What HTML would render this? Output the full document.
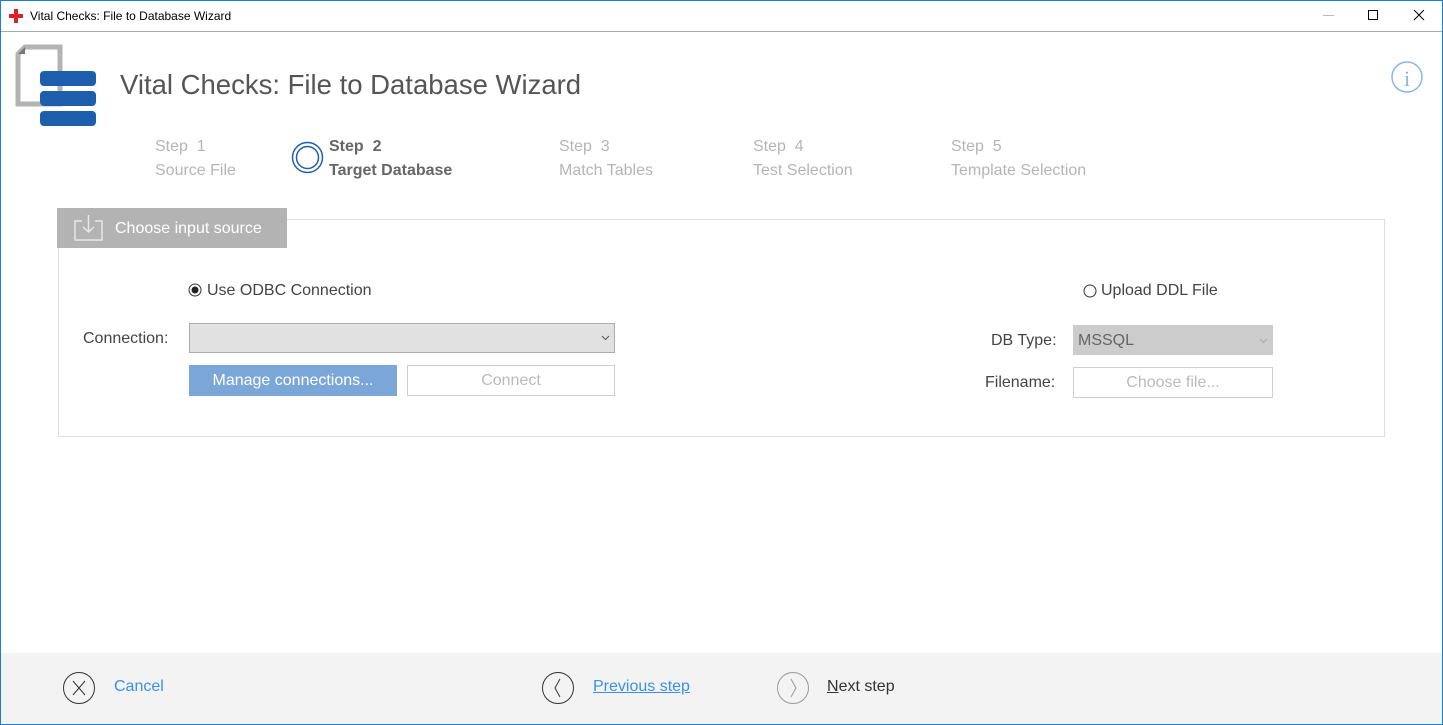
<!DOCTYPE html>
<html><head><meta charset="utf-8"><style>
*{margin:0;padding:0;box-sizing:border-box}
body{width:1443px;height:725px;position:relative;overflow:hidden;background:#fff;font-family:"Liberation Sans",sans-serif;color:#444}
.a{position:absolute;white-space:nowrap}
.frame{position:absolute;left:0;top:0;width:1443px;height:725px;border:1px solid #1a7fd4;pointer-events:none}
.step{color:#b5b5b5;font-size:16px;line-height:24px}
.btn{position:absolute;font-size:15px;text-align:center}
</style></head><body>
<div class="a" style="left:8px;top:8px;width:16px;height:16px">
<div class="a" style="left:6px;top:1px;width:4px;height:14px;background:#d9232b"></div>
<div class="a" style="left:1px;top:6px;width:14px;height:4px;background:#d9232b"></div></div>
<div class="a" style="left:30px;top:9px;font-size:12px;color:#000">Vital Checks: File to Database Wizard</div>
<div class="a" style="left:1323px;top:15px;width:11px;height:1px;background:#bbb"></div>
<div class="a" style="left:1368px;top:10px;width:10px;height:10px;border:1px solid #000"></div>
<svg class="a" style="left:1413px;top:9px" width="12" height="12"><path d="M1 1L11 11M11 1L1 11" stroke="#000" stroke-width="1"/></svg>
<div class="a" style="left:1px;top:31px;width:1441px;height:1px;background:#aaa"></div>
<svg class="a" style="left:15px;top:44px" width="85" height="85">
<path d="M10 3H45V60H3V10Z" fill="none" stroke="#b3b3b3" stroke-width="5"/>
<path d="M3 10L10 3V10Z" fill="#777"/>
<rect x="25" y="27" width="56" height="15" rx="4" fill="#1e5fad"/>
<rect x="25" y="47" width="56" height="15" rx="4" fill="#1e5fad"/>
<rect x="25" y="67" width="56" height="15" rx="4" fill="#1e5fad"/>
</svg>
<div class="a" style="left:120px;top:69px;font-size:27.5px;color:#555">Vital Checks: File to Database Wizard</div>
<svg class="a" style="left:1390px;top:60px" width="34" height="34"><circle cx="17" cy="17" r="15" fill="none" stroke="#8ab6e6" stroke-width="1.5"/><text x="17" y="26" font-family="Liberation Serif" font-size="22" fill="#8ab6e6" text-anchor="middle">i</text></svg>
<div class="a step" style="left:155px;top:135px">Step&nbsp; 1<br>Source File</div>
<svg class="a" style="left:291px;top:141px" width="33" height="33"><circle cx="16.5" cy="16.5" r="15" fill="none" stroke="#1e5fad" stroke-width="1.5"/><circle cx="16.5" cy="16.5" r="11" fill="none" stroke="#1e5fad" stroke-width="1.5"/></svg>
<div class="a step" style="left:329px;top:135px;color:#666;font-weight:bold">Step&nbsp; 2<br>Target Database</div>
<div class="a step" style="left:559px;top:135px">Step&nbsp; 3<br>Match Tables</div>
<div class="a step" style="left:753px;top:135px">Step&nbsp; 4<br>Test Selection</div>
<div class="a step" style="left:951px;top:135px">Step&nbsp; 5<br>Template Selection</div>
<div class="a" style="left:58px;top:219px;width:1327px;height:218px;border:1px solid #ddd"></div>
<div class="a" style="left:57px;top:208px;width:230px;height:40px;background:#b3b3b3"></div>
<svg class="a" style="left:72px;top:213px" width="34" height="30"><path d="M10 8H3V27H30V8H23" fill="none" stroke="#e8e8e8" stroke-width="1.5"/><path d="M16.5 2V19M11 14L16.5 19L22 14" fill="none" stroke="#e8e8e8" stroke-width="1.5"/></svg>
<div class="a" style="left:115px;top:220px;font-size:16px;color:#fff">Choose input source</div>
<svg class="a" style="left:188px;top:283px" width="14" height="14"><circle cx="7" cy="7" r="6" fill="none" stroke="#333"/><circle cx="7" cy="7" r="3.5" fill="#222"/></svg>
<div class="a" style="left:207px;top:282px;font-size:16px;color:#444">Use ODBC Connection</div>
<div class="a" style="left:83px;top:330px;font-size:16px;color:#444">Connection:</div>
<div class="a" style="left:189px;top:323px;width:426px;height:30px;background:#e1e1e1;border:1px solid #adadad"></div>
<svg class="a" style="left:601px;top:335px" width="9" height="6"><path d="M1 1L4.5 4.5L8 1" fill="none" stroke="#555"/></svg>
<div class="btn" style="left:189px;top:365px;width:208px;height:31px;background:#7ba7d8;color:#fff;line-height:31px;font-size:16px">Manage connections...</div>
<div class="btn" style="left:407px;top:365px;width:208px;height:31px;border:1px solid #cfcfcf;color:#bbb;line-height:29px;font-size:16px">Connect</div>
<svg class="a" style="left:1083px;top:284px" width="14" height="14"><circle cx="7" cy="7" r="6" fill="none" stroke="#333"/></svg>
<div class="a" style="left:1101px;top:282px;font-size:16px;color:#444">Upload DDL File</div>
<div class="a" style="left:991px;top:332px;font-size:16px;color:#444">DB Type:</div>
<div class="a" style="left:1073px;top:325px;width:200px;height:30px;background:#cccccc;border:1px solid #ccc;font-size:16px;color:#666;line-height:29px;padding-left:4px">MSSQL</div>
<svg class="a" style="left:1259px;top:338px" width="9" height="6"><path d="M1 1L4.5 4.5L8 1" fill="none" stroke="#aaa"/></svg>
<div class="a" style="left:985px;top:374px;font-size:16px;color:#444">Filename:</div>
<div class="btn" style="left:1073px;top:367px;width:200px;height:31px;border:1px solid #cfcfcf;color:#bbb;line-height:29px;font-size:16px">Choose file...</div>
<div class="a" style="left:1px;top:653px;width:1441px;height:71px;background:#f3f3f3"></div>
<svg class="a" style="left:62px;top:671px" width="34" height="34"><circle cx="17" cy="17" r="15.5" fill="none" stroke="#333"/><path d="M11 10L23 24M23 10L11 24" stroke="#333"/></svg>
<div class="a" style="left:114px;top:678px;font-size:16px;color:#3c91e6">Cancel</div>
<svg class="a" style="left:541px;top:671px" width="34" height="34"><circle cx="17" cy="17" r="15.5" fill="none" stroke="#333"/><path d="M19 8L14 17L19 26" fill="none" stroke="#333"/></svg>
<div class="a" style="left:593px;top:678px;font-size:16px;color:#3c91e6;text-decoration:underline">Previous step</div>
<svg class="a" style="left:776px;top:671px" width="34" height="34"><circle cx="17" cy="17" r="15.5" fill="none" stroke="#999"/><path d="M15 8L20 17L15 26" fill="none" stroke="#999"/></svg>
<div class="a" style="left:827px;top:678px;font-size:16px;color:#333"><u>N</u>ext step</div>
<div class="frame"></div>
</body></html>
